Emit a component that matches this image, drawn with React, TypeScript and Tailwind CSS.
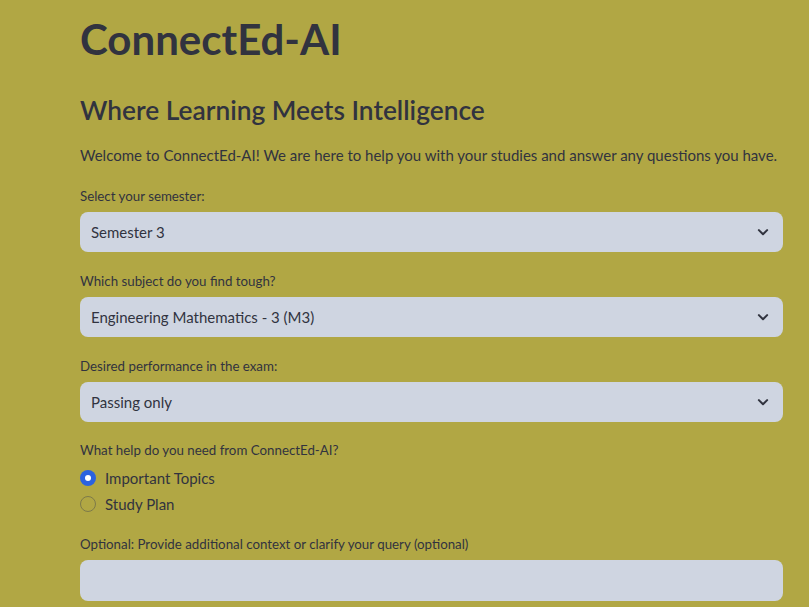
import React from "react";

function Chevron() {
  return (
    <svg width="18" height="18" viewBox="0 0 24 24" fill="none" stroke="#31333f" strokeWidth="2.75" strokeLinecap="round" strokeLinejoin="round">
      <path d="M6.5 9.5l5.5 5.5 5.5-5.5" />
    </svg>
  );
}

function Select({ value }: { value: string }) {
  return (
    <div className="h-[40px] w-full rounded-[8px] bg-[#cfd5e1] flex items-center justify-between pl-[11px] pr-[11px]">
      <span className="text-[15px] text-[#31333f]">{value}</span>
      <Chevron />
    </div>
  );
}

function Label({ children }: { children: React.ReactNode }) {
  return <div className="text-[13.3px] leading-[20px] text-[#31333f] mb-[6px]">{children}</div>;
}

export default function App() {
  return (
    <div className="min-h-screen w-full bg-[#b1a744] text-[#31333f] font-[Lato,sans-serif]">
      <div className="pl-[80px] w-[783px] pt-[11px]">
        <h1 className="text-[42px] font-bold leading-[56px]">ConnectEd-AI</h1>
        <h2 className="text-[26.3px] font-semibold leading-[36px] mt-[25px]">Where Learning Meets Intelligence</h2>
        <p className="text-[15px] leading-[24px] mt-[15px] whitespace-nowrap">
          Welcome to ConnectEd-AI! We are here to help you with your studies and answer any questions you have.
        </p>
        <div className="mt-[19px]">
          <Label>Select your semester:</Label>
          <Select value="Semester 3" />
        </div>
        <div className="mt-[19px]">
          <Label>Which subject do you find tough?</Label>
          <Select value="Engineering Mathematics - 3 (M3)" />
        </div>
        <div className="mt-[19px]">
          <Label>Desired performance in the exam:</Label>
          <Select value="Passing only" />
        </div>
        <div className="mt-[18px]">
          <Label>What help do you need from ConnectEd-AI?</Label>
          <div className="flex flex-col gap-[6px] pt-[2px]">
            <div className="flex items-center gap-[9px] h-[20px]">
              <span className="w-[16px] h-[16px] rounded-full bg-[#2b62e0] flex items-center justify-center">
                <span className="w-[6px] h-[6px] rounded-full bg-white" />
              </span>
              <span className="text-[15px]">Important Topics</span>
            </div>
            <div className="flex items-center gap-[9px] h-[20px]">
              <span className="w-[16px] h-[16px] rounded-full border border-[#7d7a4a]" />
              <span className="text-[15px]">Study Plan</span>
            </div>
          </div>
        </div>
        <div className="mt-[20px]">
          <Label>Optional: Provide additional context or clarify your query (optional)</Label>
          <div className="h-[41px] w-full rounded-[8px] bg-[#cfd5e1]" />
        </div>
      </div>
    </div>
  );
}
